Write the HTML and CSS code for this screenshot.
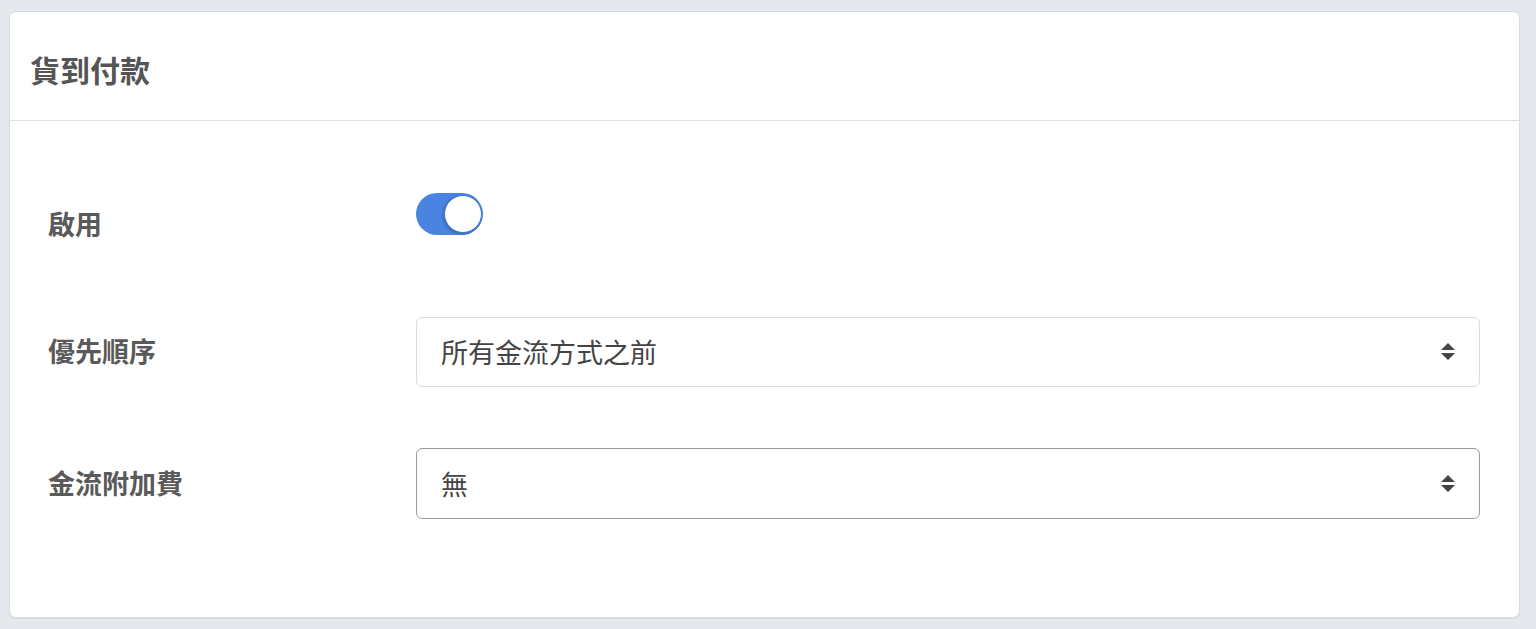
FILE: index.html
```html
<!DOCTYPE html>
<html lang="zh-Hant">
<head>
    <meta charset="UTF-8">
    <meta name="viewport" content="width=device-width, initial-scale=1.0">
    <title>貨到付款</title>
    <link rel="stylesheet" href="styles.css">
</head>
<body>
    <div class="panel">
        <div class="panel-heading">
            <h2>貨到付款</h2>
        </div>
        <div class="panel-body">
            <!-- enable toggle -->
            <div class="form-row row-toggle">
                <label class="form-label">啟用</label>
                <div class="form-control-wrap">
                    <span class="switch"><span class="knob"></span></span>
                </div>
            </div>

            <div class="form-row row-order">
                <label class="form-label">優先順序</label>
                <div class="select">
                    <span>所有金流方式之前</span>
                    <svg class="caret" width="16" height="20" viewBox="0 0 16 20">
                        <path d="M1 8 L8 1 L15 8 Z M1 11 L15 11 L8 18 Z" fill="#444"/>
                    </svg>
                </div>
            </div>

            <div class="form-row">
                <label class="form-label">金流附加費</label>
                <div class="select select-active">
                    <span>無</span>
                    <svg class="caret" width="16" height="20" viewBox="0 0 16 20">
                        <path d="M1 8 L8 1 L15 8 Z M1 11 L15 11 L8 18 Z" fill="#444"/>
                    </svg>
                </div>
            </div>
        </div>
    </div>
</body>
</html>
```

FILE: styles.css
```css
/* Page */
body {
    font-family: "Noto Sans CJK TC", "Noto Sans", sans-serif;
    background-color: #e5e9ed;
    margin: 0;
    padding: 11px 16px 12px 9px;
}

.panel {
    background: #fff;
    border: 1px solid #d9dcdf;
    border-radius: 7px;
    box-shadow: 0 1px 2px rgba(0, 0, 0, 0.06);
}

.panel-heading {
    height: 108px;
    border-bottom: 1px solid #dcdfe2;
    padding: 0 20px;
    display: flex;
    align-items: center;
}

.panel-heading h2 {
    margin: 6px 0 0;
    font-size: 30px;
    font-weight: 700;
    color: #555;
    line-height: 1;
}

.panel-body {
    padding: 72px 39px 98px 38px;
}

/* Form rows */
.form-row {
    display: flex;
    align-items: center;
}

.row-toggle {
    align-items: flex-start;
    margin-bottom: 78px;
}

.row-order {
    margin-bottom: 61px;
}

.form-label {
    width: 368px;
    flex-shrink: 0;
    font-size: 27px;
    font-weight: 700;
    color: #5a5a5a;
    line-height: 30px;
    margin-top: -2px;
}

.row-toggle .form-label {
    padding-top: 16px;
    margin-top: 0;
}

/* Toggle switch */
.switch {
    display: block;
    width: 67px;
    height: 42px;
    border-radius: 21px;
    background-color: #4a84e0;
    position: relative;
}

.switch .knob {
    position: absolute;
    top: 2px;
    right: 1px;
    width: 36px;
    height: 36px;
    border-radius: 50%;
    background: #fff;
    border: 1px solid #3f78d6;
    box-shadow: -1px 1px 3px rgba(0, 0, 0, 0.25);
}

/* Select boxes */
.select {
    flex: 1;
    height: 70px;
    box-sizing: border-box;
    border: 1px solid #dcdcdc;
    border-radius: 6px;
    padding: 0 23px 0 24px;
    display: flex;
    align-items: center;
    justify-content: space-between;
    font-size: 27px;
    color: #444;
}

.select-active {
    height: 71px;
    border-color: #9b9b9b;
}

.select span {
    margin-top: -1px;
}
```
